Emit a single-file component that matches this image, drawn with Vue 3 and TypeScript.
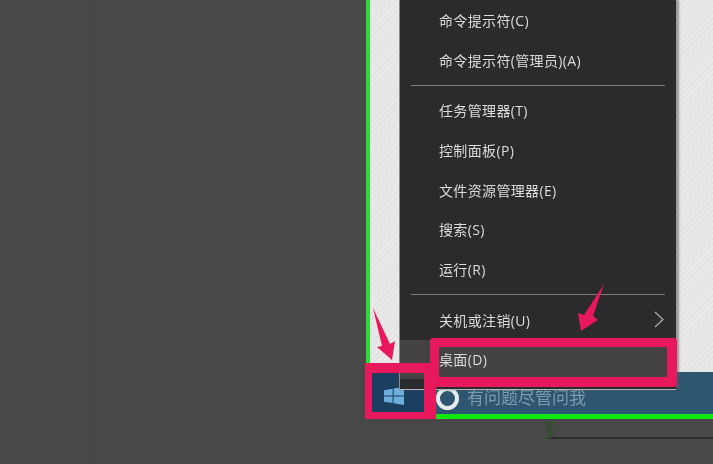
<script setup lang="ts">
interface MenuItem {
  label: string
  sub?: boolean
  active?: boolean
}

const groups: MenuItem[][] = [
  [{ label: '命令提示符(C)' }, { label: '命令提示符(管理员)(A)' }],
  [
    { label: '任务管理器(T)' },
    { label: '控制面板(P)' },
    { label: '文件资源管理器(E)' },
    { label: '搜索(S)' },
    { label: '运行(R)' }
  ],
  [{ label: '关机或注销(U)', sub: true }, { label: '桌面(D)', active: true }]
]
</script>

<template>
  <main class="page">
    <div class="guide"></div>

    <section class="shot">
      <div class="wallpaper"></div>
      <footer class="taskbar">
        <div class="start">
          <svg class="winlogo" width="20" height="18" viewBox="0 0 20 18">
            <path d="M0 3.2 8.6 1.7V8.4H0ZM9.6 1.5 20 0V8.4H9.6ZM0 9.4H8.6V16L0 14.8ZM9.6 9.4H20V18L9.6 16.3Z" fill="#6cafdc" />
          </svg>
        </div>
        <div class="search">
          <span class="ring"></span>
          <span class="hint">有问题尽管问我</span>
        </div>
      </footer>
    </section>

    <div class="behind"></div>

    <nav class="menu">
      <template v-for="(group, i) in groups" :key="i">
        <hr v-if="i > 0" class="sep" />
        <div v-for="item in group" :key="item.label" class="row" :class="{ active: item.active }">
          <span>{{ item.label }}</span>
          <svg v-if="item.sub" width="10" height="17" viewBox="0 0 10 17">
            <path d="M1 1 9 8.5 1 16" fill="none" stroke="#a9a9a9" stroke-width="1.3" />
          </svg>
        </div>
      </template>
    </nav>

    <!-- annotations drawn on top of the screenshot -->
    <div class="mark mark-start"></div>
    <div class="mark mark-desk"></div>
    <svg class="arrows" width="713" height="464" viewBox="0 0 713 464">
      <path d="M373 308 390 344 395 341 392 360 377 347 382 346Z" fill="#e8185c" />
      <path d="M604 284 593 316 598 320 581 331 578 313 584 315Z" fill="#e8185c" />
    </svg>
  </main>
</template>

<style scoped>
.page {
  position: relative;
  width: 713px;
  height: 464px;
  overflow: hidden;
  background: #484848;
  font-family: "Open Sans", "Noto Sans CJK SC", sans-serif;
}

.guide {
  position: absolute;
  left: 92px;
  top: 0;
  width: 1px;
  height: 464px;
  background: #444444;
}

.shot {
  display: flex;
  flex-direction: column;
  height: 419px;
  margin-left: 366px;
  border-left: 4px solid #2bdc35;
  border-bottom: 5px solid #0ee80e;
  box-sizing: border-box;
}

.wallpaper {
  flex: 1;
  background: repeating-linear-gradient(135deg, #eaeaea 0 2px, #e3e3e3 2px 4px);
}

.taskbar {
  display: flex;
  height: 42px;
  background: #2f5670;
}

.start {
  display: flex;
  width: 54px;
  padding: 15px 0 0 14px;
  box-sizing: border-box;
  background: #1a3f5f;
}

.winlogo {
  display: block;
}

.search {
  display: flex;
  align-items: center;
  gap: 8px;
  padding: 10px 0 0 12px;
}

.ring {
  width: 23px;
  height: 23px;
  border: 4px solid #e6eef2;
  border-radius: 50%;
  box-sizing: border-box;
  filter: blur(0.5px);
}

.hint {
  margin-top: -3px;
  font-size: 17px;
  color: #7d9aae;
  filter: blur(0.6px);
}

.behind {
  position: absolute;
  left: 546px;
  top: 419px;
  width: 167px;
  height: 20px;
  border-left: 7px solid #3a4c38;
  border-bottom: 2px solid #2e2e2e;
  box-sizing: border-box;
}

.menu {
  position: absolute;
  left: 399px;
  top: 0;
  display: flex;
  flex-direction: column;
  width: 277px;
  height: 390px;
  box-sizing: border-box;
  background: #2b2a2c;
  border-left: 1px solid #8a8a8a;
  border-bottom: 1px solid #b5b5b5;
  box-shadow: 3px 0 2px rgba(90, 90, 90, 0.55);
}

.row {
  display: flex;
  align-items: center;
  justify-content: space-between;
  flex: 0 0 39.7px;
  padding: 0 12px 0 39px;
  font-size: 14px;
  letter-spacing: 0.35px;
  color: #dcdcdc;
}

.row span {
  filter: blur(0.45px);
}

.row.active {
  background: #444243;
}

.sep {
  flex: none;
  height: 1px;
  margin: 5.5px 11px 4.5px 11px;
  border: 0;
  background: #7b7b7b;
}

.mark {
  position: absolute;
  box-sizing: border-box;
  border-style: solid;
  border-color: #e8185c;
}

.mark-start {
  left: 365px;
  top: 363px;
  width: 71px;
  height: 56px;
  border-width: 10px 12px 7px 7px;
}

.mark-desk {
  left: 430px;
  top: 338px;
  width: 247px;
  height: 49px;
  border-width: 9px 10px 10px 9px;
  border-radius: 3px;
}

.arrows {
  position: absolute;
  left: 0;
  top: 0;
}
</style>
